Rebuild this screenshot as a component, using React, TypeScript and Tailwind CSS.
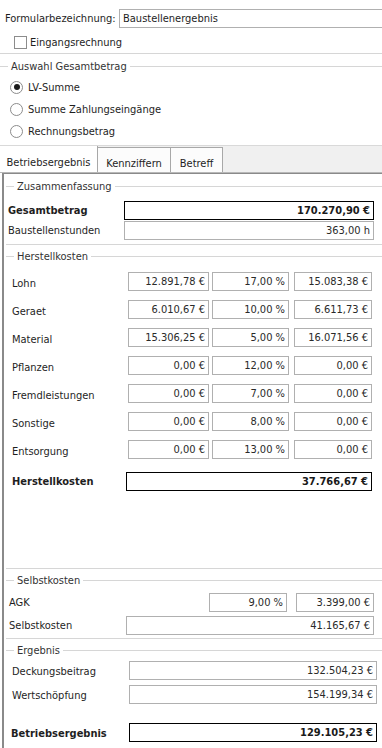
import React from "react";

const Box = ({
  children,
  bold = false,
  className = "",
}: {
  children?: React.ReactNode;
  bold?: boolean;
  className?: string;
}) => (
  <div
    className={`flex h-[19px] items-center justify-end bg-white pr-[3px] ${
      bold ? "border border-black font-bold text-[#1a1a1a]" : "border border-[#b0b0b0] text-[#2a2a2a]"
    } ${className}`}
  >
    {children}
  </div>
);

const GroupHeader = ({ title, className = "" }: { title: string; className?: string }) => (
  <div className={`flex h-[14px] items-center ${className}`}>
    <div className="h-px w-[8px] bg-[#d6d6d6]" />
    <span className="px-[3px] text-[#333]">{title}</span>
    <div className="h-px flex-1 bg-[#d6d6d6]" />
  </div>
);

const Sep = ({ className = "" }: { className?: string }) => (
  <div className={`h-px w-full bg-[#d6d6d6] ${className}`} />
);

const Radio = ({ checked, label }: { checked?: boolean; label: string }) => (
  <div className="flex h-[22px] items-center pl-[10px]">
    <div className="flex h-[13px] w-[13px] items-center justify-center rounded-full border border-[#8c8c8c] bg-white">
      {checked && <div className="h-[6px] w-[6px] rounded-full bg-[#1a1a1a]" />}
    </div>
    <span className="ml-[5px]">{label}</span>
  </div>
);

const costRows: [string, string, string, string][] = [
  ["Lohn", "12.891,78 €", "17,00 %", "15.083,38 €"],
  ["Geraet", "6.010,67 €", "10,00 %", "6.611,73 €"],
  ["Material", "15.306,25 €", "5,00 %", "16.071,56 €"],
  ["Pflanzen", "0,00 €", "12,00 %", "0,00 €"],
  ["Fremdleistungen", "0,00 €", "7,00 %", "0,00 €"],
  ["Sonstige", "0,00 €", "8,00 %", "0,00 €"],
  ["Entsorgung", "0,00 €", "13,00 %", "0,00 €"],
];

export default function App() {
  return (
    <div className="h-[748px] w-[382px] overflow-hidden bg-white font-['Tahoma','DejaVu_Sans_Condensed','DejaVu_Sans',sans-serif] text-[11px] leading-none text-[#1e1e1e]">
      {/* Formularbezeichnung */}
      <div className="mt-[9px] flex h-[19px] items-center pl-[5px]">
        <span className="w-[114px]">Formularbezeichnung:</span>
        <div className="mr-[-4px] flex h-[19px] flex-1 items-center border border-[#b0b0b0] pl-[3px]">
          Baustellenergebnis
        </div>
      </div>
      {/* Checkbox */}
      <div className="mt-[7px] flex h-[14px] items-center pl-[14px]">
        <div className="h-[13px] w-[13px] border border-[#8c8c8c] bg-white" />
        <span className="ml-[3px]">Eingangsrechnung</span>
      </div>
      <Sep className="mt-[4px]" />
      <GroupHeader title="Auswahl Gesamtbetrag" className="mt-[5px]" />
      <div className="mt-[3px] flex flex-col">
        <Radio checked label="LV-Summe" />
        <Radio label="Summe Zahlungseingänge" />
        <Radio label="Rechnungsbetrag" />
      </div>

      {/* Tabs */}
      <div className="mt-[3px] flex h-[27px] items-end border-t border-[#d9d9d9] bg-[#f0f0f0]">
        <div className="flex h-[26px] w-[98px] items-center justify-center border-r border-[#a8a8a8] bg-white pt-[6px]">
          Betriebsergebnis
        </div>
        <div className="flex h-[25px] w-[73px] items-center justify-center border-r border-t border-[#a8a8a8] bg-[#fcfcfc] pt-[6px]">
          Kennziffern
        </div>
        <div className="flex h-[25px] w-[52px] items-center justify-center border-r border-t border-[#a8a8a8] bg-[#fcfcfc] pt-[6px]">
          Betreff
        </div>
      </div>
      <div className="h-px w-full bg-[#b8b8b8]" />
      <div className="ml-[2px] flex h-[575px] flex-col border-l-2 border-t border-[#8a8a8a] pl-[2px]">
        {/* Zusammenfassung */}
        <GroupHeader title="Zusammenfassung" className="mt-[5px]" />
        <div className="mt-[8px] flex items-center">
          <span className="w-[118px] pl-[2px] font-bold">Gesamtbetrag</span>
          <Box bold className="w-[250px]">
            170.270,90 €
          </Box>
        </div>
        <div className="mt-[1px] flex items-center">
          <span className="w-[118px] pl-[2px]">Baustellenstunden</span>
          <Box className="w-[250px]">363,00 h</Box>
        </div>
        <Sep className="mt-[4px]" />
        {/* Herstellkosten */}
        <GroupHeader title="Herstellkosten" className="mt-[4px]" />
        <div className="mt-[4px] flex flex-col">
          {costRows.map(([l, a, p, b]) => (
            <div key={l} className="flex h-[28px] items-center">
              <span className="w-[122px] pl-[6px] pt-[4px]">{l}</span>
              <Box className="h-[18px] w-[81px]">{a}</Box>
              <Box className="ml-[3px] h-[18px] w-[77px]">{p}</Box>
              <Box className="ml-[5px] h-[18px] w-[78px]">{b}</Box>
            </div>
          ))}
        </div>
        <div className="mt-[9px] flex items-center">
          <span className="w-[120px] pl-[6px] font-bold">Herstellkosten</span>
          <Box bold className="w-[246px]">
            37.766,67 €
          </Box>
        </div>
        <div className="h-[77px]" />
        <Sep />
        {/* Selbstkosten */}
        <GroupHeader title="Selbstkosten" className="mt-[4px]" />
        <div className="mt-[6px] flex items-center">
          <span className="w-[203px] pl-[3px]">AGK</span>
          <Box className="w-[78px]">9,00 %</Box>
          <Box className="ml-[9px] w-[78px]">3.399,00 €</Box>
        </div>
        <div className="mt-[4px] flex items-center">
          <span className="w-[120px] pl-[3px]">Selbstkosten</span>
          <Box className="w-[248px]">41.165,67 €</Box>
        </div>
        <Sep className="mt-[3px]" />
        {/* Ergebnis */}
        <GroupHeader title="Ergebnis" className="mt-[4px]" />
        <div className="mt-[4px] flex items-center">
          <span className="w-[123px] pl-[6px] pt-[2px]">Deckungsbeitrag</span>
          <Box className="w-[248px]">132.504,23 €</Box>
        </div>
        <div className="mt-[5px] flex items-center">
          <span className="w-[123px] pl-[6px] pt-[2px]">Wertschöpfung</span>
          <Box className="w-[248px]">154.199,34 €</Box>
        </div>
        <div className="mt-[19px] flex items-center">
          <span className="w-[123px] pl-[5px] pt-[2px] font-bold">Betriebsergebnis</span>
          <Box bold className="w-[248px]">
            129.105,23 €
          </Box>
        </div>
      </div>
    </div>
  );
}
